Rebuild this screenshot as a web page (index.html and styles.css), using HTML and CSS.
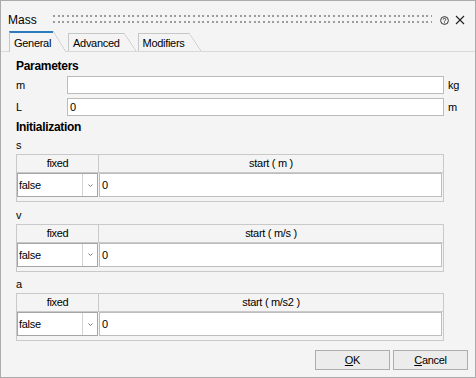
FILE: index.html
```html
<!DOCTYPE html>
<html lang="en">
<head>
    <meta charset="UTF-8">
    <title>Mass</title>
    <link rel="stylesheet" href="styles.css">
</head>
<body>
    <div class="dialog">
        <div class="titlebar">
            <span class="title">Mass</span>
            <span class="grip"></span>
            <svg class="help" width="9" height="9" viewBox="0 0 9 9">
                <circle cx="4.5" cy="4.5" r="3.9" fill="none" stroke="#333" stroke-width="1"/>
                <path d="M3.2 3.6a1.3 1.3 0 1 1 1.9 1.1c-.45.25-.6.45-.6.9" fill="none" stroke="#333" stroke-width="0.9"/>
                <rect x="4.05" y="6.3" width="0.9" height="0.9" fill="#333"/>
            </svg>
            <svg class="close" width="10" height="10" viewBox="0 0 10 10">
                <path d="M1 1L9 9M9 1L1 9" stroke="#222" stroke-width="1.1"/>
            </svg>
        </div>

        <div class="tabs">
            <div class="tab active"><span class="tab-label">General</span></div>
            <div class="tab"><span class="tab-label">Advanced</span></div>
            <div class="tab"><span class="tab-label">Modifiers</span></div>
        </div>

        <div class="panel">
            <div class="group-title first">Parameters</div>
            <div class="params">
                <label for="p-m">m</label>
                <input class="field" id="p-m" value="">
                <span class="unit">kg</span>
                <label for="p-l">L</label>
                <input class="field" id="p-l" value="0">
                <span class="unit">m</span>
            </div>

            <div class="group-title">Initialization</div>

            <div class="var first">
                <div class="var-name">s</div>
                <div class="var-table">
                    <div class="var-head">
                        <div class="head-fixed">fixed</div>
                        <div class="head-start">start ( m )</div>
                    </div>
                    <div class="var-row">
                        <div class="combo">
                            <span class="combo-value">false</span>
                            <span class="combo-arrow"><svg width="5" height="3" viewBox="0 0 5 3"><path d="M0.5 0.5L2.5 2.5L4.5 0.5" fill="none" stroke="#7a7a7a"/></svg></span>
                        </div>
                        <div class="cell-input">0</div>
                    </div>
                </div>
            </div>

            <div class="var">
                <div class="var-name">v</div>
                <div class="var-table">
                    <div class="var-head">
                        <div class="head-fixed">fixed</div>
                        <div class="head-start">start ( m/s )</div>
                    </div>
                    <div class="var-row">
                        <div class="combo">
                            <span class="combo-value">false</span>
                            <span class="combo-arrow"><svg width="5" height="3" viewBox="0 0 5 3"><path d="M0.5 0.5L2.5 2.5L4.5 0.5" fill="none" stroke="#7a7a7a"/></svg></span>
                        </div>
                        <div class="cell-input">0</div>
                    </div>
                </div>
            </div>

            <div class="var">
                <div class="var-name">a</div>
                <div class="var-table">
                    <div class="var-head">
                        <div class="head-fixed">fixed</div>
                        <div class="head-start">start ( m/s2 )</div>
                    </div>
                    <div class="var-row">
                        <div class="combo">
                            <span class="combo-value">false</span>
                            <span class="combo-arrow"><svg width="5" height="3" viewBox="0 0 5 3"><path d="M0.5 0.5L2.5 2.5L4.5 0.5" fill="none" stroke="#7a7a7a"/></svg></span>
                        </div>
                        <div class="cell-input">0</div>
                    </div>
                </div>
            </div>
        </div>

        <div class="buttons">
            <button class="btn"><u>O</u>K</button>
            <button class="btn"><u>C</u>ancel</button>
        </div>
    </div>
</body>
</html>
```

FILE: styles.css
```css
* {
    box-sizing: border-box;
}
body {
    margin: 0;
    font-family: "Liberation Sans", Arial, sans-serif;
    font-size: 11px;
    letter-spacing: -0.3px;
    color: #000;
    background: #f4f4f4;
}
.dialog {
    width: 476px;
    height: 378px;
    border: 1px solid #ababab;
    background: #f4f4f4;
    display: flex;
    flex-direction: column;
}

/* title bar */
.titlebar {
    height: 30px;
    padding: 0 10px 0 7px;
    display: flex;
    align-items: flex-start;
}
.title {
    margin-top: 12px;
    font-size: 12px;
    line-height: 14px;
    letter-spacing: 0;
}
.grip {
    flex: 1;
    height: 8px;
    margin: 14px 8px 0 16px;
    background-image:
        conic-gradient(from 270deg at 2px 2px, #9c9c9c 25%, transparent 0),
        conic-gradient(from 270deg at 2px 2px, #9c9c9c 25%, transparent 0),
        conic-gradient(from 270deg at 2px 2px, #9c9c9c 25%, transparent 0);
    background-size: 14px 6px;
    background-position: 0 0, 5px 0, 9px 0;
}
.help {
    margin-top: 15px;
    margin-right: 6px;
}
.close {
    margin-top: 14px;
}

/* tabs */
.tabs {
    height: 21px;
    padding-left: 8px;
    display: flex;
    align-items: flex-end;
    border-bottom: 1px solid #d9d9d9;
}
.tab {
    display: flex;
    height: 18px;
    margin-right: 2px;
}
.tab-label {
    border-left: 1px solid #c6c6c6;
    border-top: 1px solid #c6c6c6;
    padding: 3px 4px 0 4px;
    line-height: 13px;
}
.tab::after {
    content: "";
    width: 12px;
    background: linear-gradient(to top right, transparent calc(50% - 0.6px), #c6c6c6 50%, transparent calc(50% + 0.6px));
}
.tab.active {
    height: 21px;
    margin-bottom: -1px;
    background: #f4f4f4;
}
.tab.active .tab-label {
    border-top: 2px solid #2b7bbd;
    padding-top: 4px;
    padding-right: 2px;
}
.tab.active::after {
    width: 13px;
}

/* general page */
.panel {
    padding-left: 15px;
}
.group-title {
    margin-top: 4px;
    font-size: 12px;
    font-weight: bold;
    line-height: 14px;
}
.group-title.first {
    margin-top: 7px;
}
.params {
    margin-top: 3px;
    display: grid;
    grid-template-columns: 51px 377px auto;
    row-gap: 4px;
}
.params label,
.unit {
    line-height: 18px;
}
.unit {
    padding-left: 4px;
}
.field {
    height: 18px;
    margin: 0;
    padding: 0 2px;
    border: 1px solid #bcbcbc;
    background: #fff;
    font: inherit;
    letter-spacing: inherit;
    color: inherit;
    outline: none;
}

/* initialization tables */
.var {
    margin-top: 6.5px;
}
.var.first {
    margin-top: 5px;
}
.var-name {
    line-height: 13px;
    margin-bottom: 2px;
}
.var-table {
    width: 428px;
    height: 48px;
    border: 1px solid #c9c9c9;
}
.var-head {
    height: 18px;
    display: grid;
    grid-template-columns: 82px 1fr;
    border-bottom: 1px solid #c9c9c9;
    line-height: 17px;
    text-align: center;
}
.head-fixed {
    border-right: 1px solid #c9c9c9;
}
.var-row {
    display: flex;
    gap: 1px;
    padding-right: 1px;
}
.combo {
    width: 81px;
    height: 24px;
    display: flex;
    border: 1px solid #a6a6a6;
    background: #fff;
}
.combo-value {
    flex: 1;
    padding-left: 1px;
    border-right: 1px solid #d2d2d2;
    line-height: 22px;
}
.combo-arrow {
    width: 14px;
    display: flex;
    align-items: center;
    justify-content: center;
}
.cell-input {
    flex: 1;
    height: 24px;
    padding-left: 2px;
    border: 1px solid #bdbdbd;
    background: #fff;
    line-height: 22px;
}

/* buttons */
.buttons {
    margin-top: auto;
    padding: 0 7px 7px 0;
    display: flex;
    justify-content: flex-end;
    gap: 3px;
}
.btn {
    width: 75px;
    height: 20px;
    padding: 0;
    border: 1px solid #adadad;
    background: #ececec;
    font: inherit;
    letter-spacing: inherit;
    color: #000;
    line-height: 18px;
}
```
